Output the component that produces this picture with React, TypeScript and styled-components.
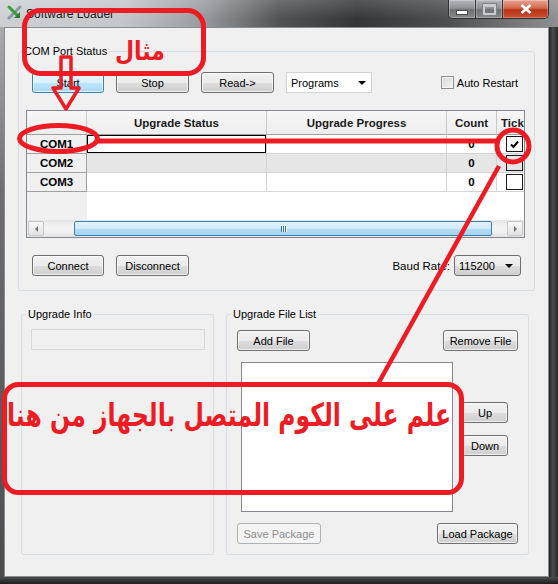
import React from 'react';
import styled, { createGlobalStyle, css } from 'styled-components';

const GlobalStyle = createGlobalStyle`
  html, body {
    margin: 0;
    padding: 0;
    background: #ffffff;
  }
  body {
    font-family: "Liberation Sans", Arial, sans-serif;
    overflow: hidden;
  }
`;

const RED = '#ed1c24';

const ports = [
  { name: 'COM1', count: 0, checked: true },
  { name: 'COM2', count: 0, checked: false },
  { name: 'COM3', count: 0, checked: false },
];

function App() {
  return (
    <>
      <GlobalStyle />
      <Window>
        <TitleBar>
          <TitleIcon width="15" height="15" viewBox="0 0 15 15">
            <path d="M2 13 L13 2" stroke="#8d9aa3" strokeWidth="3" strokeLinecap="round" />
            <path d="M2 2 L11 11" stroke="#3d9b3a" strokeWidth="3" strokeLinecap="round" />
            <path d="M13 7 L13 13 L7 13 Z" fill="#2f7f2d" />
          </TitleIcon>
          <TitleText>Software Loader</TitleText>
          <Controls>
            <CtrlButton $kind="min">
              <MinGlyph />
            </CtrlButton>
            <CtrlButton $kind="max">
              <MaxGlyph />
            </CtrlButton>
            <CtrlButton $kind="close">
              <svg width="12" height="10" viewBox="0 0 12 10">
                <path d="M1.5 1 L10.5 9 M10.5 1 L1.5 9" stroke="#ffffff" strokeWidth="2.6" />
              </svg>
            </CtrlButton>
          </Controls>
        </TitleBar>

        <FrameBody>
          <SideFrame $w={4} />
          <Client>
            <GroupBox $pad="14px 9px 14px 7px">
              <GroupTitle $shift={-4}>COM Port Status</GroupTitle>
              <ButtonRow>
                <WinButton $w={72} $default>Start</WinButton>
                <WinButton $w={73}>Stop</WinButton>
                <WinButton $w={73}>Read-&gt;</WinButton>
                <ComboBox $w={86} $flat>
                  <ComboText>Programs</ComboText>
                  <ComboArrow />
                </ComboBox>
                <CheckRow>
                  <SmallCheck />
                  <span>Auto Restart</span>
                </CheckRow>
              </ButtonRow>

              <TableFrame>
                <Grid>
                  <HeaderCell />
                  <HeaderCell>Upgrade Status</HeaderCell>
                  <HeaderCell>Upgrade Progress</HeaderCell>
                  <HeaderCell>Count</HeaderCell>
                  <HeaderCell $left>Tick</HeaderCell>
                  {ports.map((port, i) => (
                    <React.Fragment key={port.name}>
                      <RowHead>{port.name}</RowHead>
                      <DataCell $alt={i === 1} $current={i === 0} />
                      <DataCell $alt={i === 1} />
                      <DataCell $alt={i === 1} $bold>
                        {port.count}
                      </DataCell>
                      <TickCell $alt={i === 1}>
                        <TickBox>
                          {port.checked && (
                            <svg width="11" height="9" viewBox="0 0 11 9">
                              <path d="M2 4.5 L4.5 7 L9 1.5" stroke="#000" strokeWidth="2" fill="none" />
                            </svg>
                          )}
                        </TickBox>
                      </TickCell>
                    </React.Fragment>
                  ))}
                </Grid>
                <Filler>
                  <FillerHead />
                  <FillerData />
                </Filler>
                <HScroll>
                  <ScrollArrow>
                    <ArrowGlyph $dir="left" />
                  </ScrollArrow>
                  <ScrollTrack>
                    <Thumb $offset={30} $size={418}>
                      <Grip />
                      <Grip />
                      <Grip />
                    </Thumb>
                  </ScrollTrack>
                  <ScrollArrow>
                    <ArrowGlyph $dir="right" />
                  </ScrollArrow>
                </HScroll>
              </TableFrame>

              <ButtonRow $mt={17}>
                <WinButton $w={72}>Connect</WinButton>
                <WinButton $w={73}>Disconnect</WinButton>
                <BaudLabel>Baud Rate:</BaudLabel>
                <ComboBox $w={67} $mr={4}>
                  <ComboText>115200</ComboText>
                  <ComboArrow />
                </ComboBox>
              </ButtonRow>
            </GroupBox>

            <LowerRow>
              <GroupBox $pad="8px 9px 0 9px" $w={193} $h={248}>
                <GroupTitle $shift={-5}>Upgrade Info</GroupTitle>
                <LineEdit />
              </GroupBox>

              <GroupBox $pad="9px 10px 10px 10px" $w={303} $h={248}>
                <GroupTitle $shift={-6}>Upgrade File List</GroupTitle>
                <SpreadRow>
                  <WinButton $w={73}>Add File</WinButton>
                  <WinButton $w={75}>Remove File</WinButton>
                </SpreadRow>
                <ListArea>
                  <FileList />
                  <SideButtons>
                    <WinButton $w={46}>Up</WinButton>
                    <WinButton $w={46}>Down</WinButton>
                  </SideButtons>
                </ListArea>
                <SpreadRow $mt={11}>
                  <WinButton $w={84} disabled>
                    Save Package
                  </WinButton>
                  <WinButton $w={81}>Load Package</WinButton>
                </SpreadRow>
              </GroupBox>
            </LowerRow>
          </Client>
          <SideFrame $w={9} $dark />
        </FrameBody>
        <BottomFrame />

        <Annotations width="558" height="584" viewBox="0 0 558 584">
          <rect x="24.5" y="10.5" width="179" height="63" rx="16" />
          <path d="M61 57 H71 V88 H79 L66 109 L53 88 H61 Z" strokeWidth="3.5" strokeLinejoin="round" />
          <ellipse cx="58.5" cy="138.5" rx="39" ry="13" />
          <line x1="97" y1="141" x2="496" y2="141" />
          <circle cx="513" cy="146" r="16" />
          <line x1="499" y1="166" x2="378" y2="384" strokeWidth="4.5" />
          <rect x="4.5" y="384.5" width="457" height="108" rx="14" />
          <AnnoText x="140" y="60" fontSize="26" textLength="50" lengthAdjust="spacingAndGlyphs">
            مثال
          </AnnoText>
          <AnnoText x="229" y="426" fontSize="32" textLength="444" lengthAdjust="spacingAndGlyphs">
            علم على الكوم المتصل بالجهاز من هنا
          </AnnoText>
        </Annotations>
      </Window>
    </>
  );
}

const Window = styled.div`
  position: relative;
  width: 558px;
  height: 584px;
  display: flex;
  flex-direction: column;
  overflow: hidden;
  background: #3b3d3f;
  font-family: "Liberation Sans", Arial, sans-serif;
  font-size: 11px;
  color: #000;
`;

const TitleBar = styled.div`
  height: 27px;
  flex: none;
  display: flex;
  align-items: flex-start;
  background:
    linear-gradient(180deg, rgba(255, 255, 255, 0.16) 0%, rgba(255, 255, 255, 0) 70%),
    linear-gradient(90deg, #cdd1d4 0%, #c3c7ca 22%, #9a9da0 36%, #525354 50%, #353637 64%, #4d4e4f 80%, #8e9092 100%);
`;

const TitleIcon = styled.svg`
  margin: 5px 0 0 7px;
  flex: none;
`;

const TitleText = styled.span`
  margin: 7px 0 0 4px;
  font-size: 12px;
  line-height: 14px;
  color: #1b1b1b;
`;

const Controls = styled.div`
  margin-left: auto;
  margin-right: 9px;
  display: flex;
  height: 19px;
  border: 1px solid #2f3133;
  border-top: none;
  border-radius: 0 0 5px 5px;
  overflow: hidden;
  box-sizing: border-box;
`;

const CtrlButton = styled.div<{ $kind: 'min' | 'max' | 'close' }>`
  width: ${(p) => (p.$kind === 'close' ? 45 : 26)}px;
  display: flex;
  align-items: center;
  justify-content: center;
  background: ${(p) =>
    p.$kind === 'close'
      ? 'linear-gradient(180deg, #e7a593 0%, #d2684c 45%, #b73318 55%, #c9512f 100%)'
      : 'linear-gradient(180deg, #b4b7ba 0%, #8e9194 45%, #6f7275 55%, #85888b 100%)'};
  box-shadow: inset 0 0 0 1px rgba(255, 255, 255, 0.25);

  & + & {
    border-left: 1px solid #2f3133;
  }
`;

const MinGlyph = styled.span`
  width: 10px;
  height: 3px;
  margin-top: 6px;
  background: #ffffff;
  border: 1px solid #4a4a4a;
`;

const MaxGlyph = styled.span`
  width: 9px;
  height: 6px;
  border: 2px solid #c9cbcd;
  border-top-width: 3px;
  box-shadow: 0 0 0 1px #7d8083;
`;

const FrameBody = styled.div`
  flex: 1;
  display: flex;
  min-height: 0;
`;

const SideFrame = styled.div<{ $w: number; $dark?: boolean }>`
  width: ${(p) => p.$w}px;
  flex: none;
  background: ${(p) =>
    p.$dark
      ? 'linear-gradient(90deg, #1e1f20 0%, #4a4c4e 40%, #2a2b2c 100%)'
      : 'linear-gradient(180deg, #a8acaf 0%, #6c6f72 30%, #4a4c4e 100%)'};
`;

const BottomFrame = styled.div`
  height: 7px;
  flex: none;
  background: linear-gradient(180deg, #4a4c4e 0%, #1c1d1e 100%);
`;

const Client = styled.div`
  flex: 1;
  display: flex;
  flex-direction: column;
  background: #f0f0f0;
  border: 1px solid #8a8d90;
  padding: 16px 13px 0 13px;
  box-sizing: border-box;
  min-width: 0;
`;

const GroupBox = styled.fieldset<{ $pad: string; $w?: number; $h?: number }>`
  margin: 0;
  padding: ${(p) => p.$pad};
  border: 1px solid #d5dfe5;
  border-radius: 3px;
  min-width: 0;
  box-sizing: border-box;
  display: flex;
  flex-direction: column;
  ${(p) =>
    p.$w &&
    css`
      width: ${p.$w}px;
      flex: none;
    `}
  ${(p) =>
    p.$h &&
    css`
      height: ${p.$h}px;
    `}
`;

const GroupTitle = styled.legend<{ $shift: number }>`
  padding: 0 2px;
  margin-left: ${(p) => p.$shift}px;
  font-size: 11px;
  line-height: 14px;
  color: #000;
`;

const ButtonRow = styled.div<{ $mt?: number }>`
  display: flex;
  align-items: center;
  gap: 12px;
  margin: ${(p) => p.$mt ?? 0}px 0 0 6px;
`;

const SpreadRow = styled.div<{ $mt?: number }>`
  display: flex;
  justify-content: space-between;
  align-items: center;
  margin-top: ${(p) => p.$mt ?? 0}px;
`;

const WinButton = styled.button<{ $w: number; $default?: boolean }>`
  width: ${(p) => p.$w}px;
  height: 21px;
  flex: none;
  padding: 0;
  box-sizing: border-box;
  font-family: "Liberation Sans", Arial, sans-serif;
  font-size: 11px;
  color: #000;
  border: 1px solid #707070;
  border-radius: 3px;
  background: linear-gradient(180deg, #f2f2f2 0%, #ebebeb 50%, #dddddd 51%, #cfcfcf 100%);
  box-shadow: inset 0 0 0 1px rgba(255, 255, 255, 0.65);
  ${(p) =>
    p.$default &&
    css`
      border-color: #3c7fb1;
      background: linear-gradient(180deg, #eaf6fd 0%, #d9f0fc 50%, #bee6fd 51%, #a7d9f5 100%);
    `}

  &:disabled {
    color: #8d8d8d;
    border-color: #adb2b5;
    background: #f4f4f4;
    box-shadow: none;
  }
`;

const ComboBox = styled.div<{ $w: number; $flat?: boolean; $mr?: number }>`
  width: ${(p) => p.$w}px;
  height: 21px;
  flex: none;
  display: flex;
  align-items: center;
  box-sizing: border-box;
  padding: 0 ${(p) => (p.$flat ? 5 : 7)}px 0 4px;
  margin-right: ${(p) => p.$mr ?? 0}px;
  border: 1px solid ${(p) => (p.$flat ? '#d0d2d5' : '#707070')};
  border-radius: ${(p) => (p.$flat ? 0 : 3)}px;
  background: ${(p) =>
    p.$flat ? '#ffffff' : 'linear-gradient(180deg, #f2f2f2 0%, #ebebeb 50%, #dddddd 51%, #cfcfcf 100%)'};
`;

const ComboText = styled.span`
  flex: 1;
`;

const ComboArrow = styled.span`
  width: 0;
  height: 0;
  border-left: 4px solid transparent;
  border-right: 4px solid transparent;
  border-top: 4px solid #000;
`;

const CheckRow = styled.label`
  margin-left: auto;
  margin-right: 7px;
  display: flex;
  align-items: center;
  gap: 3px;
`;

const SmallCheck = styled.span`
  width: 13px;
  height: 13px;
  box-sizing: border-box;
  border: 1px solid #8e8f8f;
  background: linear-gradient(135deg, #d6d6d6 0%, #f6f6f6 100%);
  box-shadow: inset 0 0 0 1px #f4f4f4;
`;

const BaudLabel = styled.span`
  margin-left: auto;
  margin-right: -8px;
  font-size: 11.5px;
`;

const TableFrame = styled.div`
  margin-top: 17px;
  height: 128px;
  box-sizing: border-box;
  border: 1px solid #828790;
  background: #ffffff;
  display: flex;
  flex-direction: column;
  overflow: hidden;
`;

const Grid = styled.div`
  display: grid;
  grid-template-columns: 60px 180px 180px 50px 40px;
  grid-template-rows: 24px repeat(3, 19px);
  width: 510px;
  flex: none;
`;

const cellBase = css`
  box-sizing: border-box;
  display: flex;
  align-items: center;
  justify-content: center;
  white-space: nowrap;
  overflow: hidden;
`;

const HeaderCell = styled.div<{ $left?: boolean }>`
  ${cellBase}
  ${(p) =>
    p.$left &&
    css`
      justify-content: flex-start;
      padding-left: 4px;
    `}
  background: linear-gradient(180deg, #f7f7f7 0%, #ededed 100%);
  border-right: 1px solid #c8c8c8;
  border-bottom: 1px solid #a0a0a0;
  font-weight: bold;
  font-size: 11.5px;
  color: #1a1a1a;
`;

const RowHead = styled.div`
  ${cellBase}
  background: #f0f0f0;
  border-right: 1px solid #a0a0a0;
  border-bottom: 1px solid #a0a0a0;
  font-weight: bold;
  font-size: 11.5px;
`;

const DataCell = styled.div<{ $alt?: boolean; $current?: boolean; $bold?: boolean }>`
  ${cellBase}
  background: ${(p) => (p.$alt ? '#e6e6e6' : '#ffffff')};
  border-right: 1px solid #d4d4d4;
  border-bottom: 1px solid #d4d4d4;
  font-size: 11.5px;
  font-weight: ${(p) => (p.$bold ? 'bold' : 'normal')};
  ${(p) =>
    p.$current &&
    css`
      box-shadow: inset 0 0 0 1px #000000;
    `}
`;

const TickCell = styled(DataCell)`
  justify-content: flex-start;
  padding-left: 9px;
`;

const TickBox = styled.span`
  width: 17px;
  height: 16px;
  box-sizing: border-box;
  border: 1px solid #1a1a1a;
  display: flex;
  align-items: center;
  justify-content: center;
`;

const Filler = styled.div`
  flex: 1;
  display: flex;
`;

const FillerHead = styled.div`
  width: 60px;
  background: #f0f0f0;
`;

const FillerData = styled.div`
  flex: 1;
  background: #ffffff;
`;

const HScroll = styled.div`
  height: 17px;
  flex: none;
  display: flex;
  align-items: center;
  padding: 0 1px;
  box-sizing: border-box;
  background: linear-gradient(180deg, #e4e4e4 0%, #f2f2f2 35%, #f2f2f2 65%, #e4e4e4 100%);
`;

const ScrollArrow = styled.div`
  width: 16px;
  height: 15px;
  flex: none;
  box-sizing: border-box;
  border: 1px solid #c6c6c6;
  border-radius: 2px;
  background: linear-gradient(180deg, #f8f8f8 0%, #e4e4e4 100%);
  display: flex;
  align-items: center;
  justify-content: center;
`;

const ArrowGlyph = styled.span<{ $dir: 'left' | 'right' }>`
  width: 0;
  height: 0;
  border-top: 3px solid transparent;
  border-bottom: 3px solid transparent;
  ${(p) =>
    p.$dir === 'left'
      ? css`
          border-right: 3px solid #707070;
        `
      : css`
          border-left: 3px solid #707070;
        `}
`;

const ScrollTrack = styled.div`
  flex: 1;
  height: 15px;
  display: flex;
`;

const Thumb = styled.div<{ $offset: number; $size: number }>`
  margin-left: ${(p) => p.$offset}px;
  width: ${(p) => p.$size}px;
  box-sizing: border-box;
  border: 1px solid #3c7fb1;
  border-radius: 2px;
  background: linear-gradient(180deg, #e5f3fb 0%, #cde9f8 50%, #b5ddf4 51%, #a6d4ef 100%);
  display: flex;
  align-items: center;
  justify-content: center;
  gap: 1px;
`;

const Grip = styled.span`
  width: 1px;
  height: 6px;
  background: #3a6f96;
  box-shadow: 1px 0 0 #f2f9fd;
`;

const LowerRow = styled.div`
  display: flex;
  gap: 12px;
  margin-top: 16px;
  padding-left: 3px;
`;

const LineEdit = styled.div`
  width: 174px;
  height: 21px;
  box-sizing: border-box;
  border: 1px solid #d9d9d9;
  background: #f0f0f0;
`;

const ListArea = styled.div`
  display: flex;
  margin-top: 11px;
`;

const FileList = styled.div`
  width: 212px;
  height: 150px;
  margin-left: 4px;
  box-sizing: border-box;
  border: 1px solid #828790;
  background: #ffffff;
`;

const SideButtons = styled.div`
  display: flex;
  flex-direction: column;
  gap: 12px;
  margin-left: 9px;
  padding-top: 40px;
`;

const Annotations = styled.svg`
  position: absolute;
  left: 0;
  top: 0;
  pointer-events: none;
  fill: none;
  stroke: ${RED};
  stroke-width: 5;
`;

const AnnoText = styled.text`
  font-family: "DejaVu Sans", sans-serif;
  font-weight: bold;
  fill: ${RED};
  stroke: none;
  text-anchor: middle;
  direction: rtl;
`;

export default App;
